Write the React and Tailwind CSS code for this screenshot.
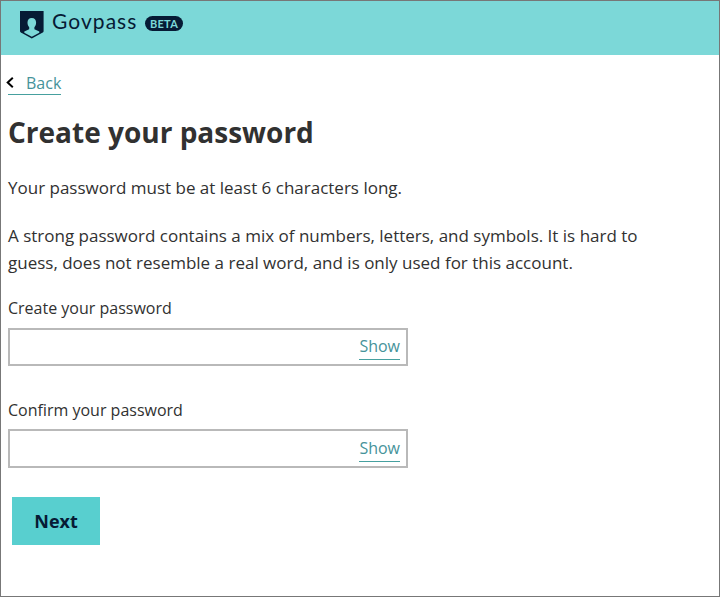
export default function App() {
  return (
    <div className="h-[597px] w-[720px] overflow-hidden border border-[#777777] bg-white font-['Open_Sans',sans-serif] text-[#313131]">
      <header className="flex h-[54px] items-start bg-[#7cd8d8] pl-[19px] pt-[10px] text-[#061b35]">
        <svg width="24" height="28" viewBox="0 0 24 28">
          <path d="M0 0H23.600V20Q23.600 21 22.700 21.500L11.800 27.500L0.900 21.500Q0 21 0 20Z" fill="#061b35" />
          <path d="M11.800 7C9 7 7.500 9 7.500 11.500C7.500 13.500 8.200 15 9.200 16.200V18.200L4.300 20.600V21.700L11.800 25.800L19.300 21.700V20.600L14.400 18.200V16.200C15.400 15 16.100 13.500 16.100 11.500C16.100 9 14.600 7 11.800 7Z" fill="#7cd8d8" />
        </svg>
        <span className="-mt-[2px] ml-2 w-[86px] whitespace-nowrap font-[Lato,sans-serif] text-[21px] leading-[24px] tracking-[1.05px]">Govpass</span>
        <span className="ml-[7px] mt-[5px] h-[15px] w-[38px] rounded-full bg-[#061b35] text-center font-[Lato,sans-serif] text-[11px] font-bold leading-[15px] tracking-[0.3px] text-[#7cd8d8]">BETA</span>
      </header>
      <main className="flex flex-col items-start pl-[7px]">
        <a href="#" className="mt-[15px] flex h-[25px] items-center border-b border-[#46a09f] pt-[2px] text-[16px] text-[#46939a]">
          <svg className="-ml-[2px] mr-3" width="8" height="12" viewBox="0 0 8 12" fill="none" stroke="#000" strokeWidth="2"><path d="M6.800 0.800L1.700 5.500L6.800 10.200" /></svg>
          Back
        </a>
        <h1 className="mt-[17px] text-[28px] font-bold leading-[40px]">Create your password</h1>
        <p className="mt-[22px] text-[17px] leading-[27px]">Your password must be at least 6 characters long.</p>
        <p className="mt-[21px] w-[660px] text-[17px] leading-[27px]">A strong password contains a mix of numbers, letters, and symbols. It is hard to<br />guess, does not resemble a real word, and is only used for this account.</p>
        <label className="mt-[20px] text-[16px] leading-[24px]">Create your password</label>
        <div className="mt-[8px] flex h-[38px] w-[400px] justify-end border-2 border-[#b9b9b9] pr-[6px]">
          <a href="#" className="h-[30px] border-b border-[#46a09f] text-[16px] leading-[32px] text-[#46939a]">Show</a>
        </div>
        <label className="mt-[32px] text-[16px] leading-[24px]">Confirm your password</label>
        <div className="mt-[7px] flex h-[39px] w-[400px] justify-end border-2 border-[#b9b9b9] pr-[6px]">
          <a href="#" className="h-[31px] border-b border-[#46a09f] text-[16px] leading-[34px] text-[#46939a]">Show</a>
        </div>
        <button className="ml-1 mt-[29px] h-[48px] w-[88px] bg-[#58cfcf] text-[18px] font-bold text-[#061b35]">Next</button>
      </main>
    </div>
  );
}
